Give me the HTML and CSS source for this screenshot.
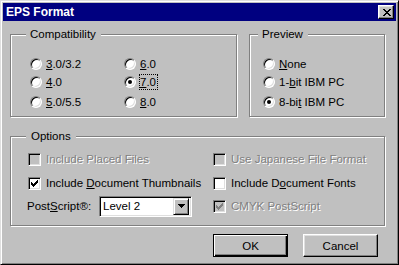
FILE: index.html
```html
<!DOCTYPE html>
<html lang="en">
<head>
    <meta charset="UTF-8">
    <meta name="viewport" content="width=device-width, initial-scale=1.0">
    <title>EPS Format</title>
    <link rel="stylesheet" href="styles.css">
</head>
<body>
    <div class="window">
        <div class="titlebar">
            <span class="title">EPS Format</span>
            <button class="close-btn" aria-label="Close">
                <svg width="8" height="7" viewBox="0 0 8 7" shape-rendering="crispEdges">
                    <path d="M0 0h2v1h-2z M6 0h2v1h-2z M1 1h2v1h-2z M5 1h2v1h-2z M2 2h4v1h-4z M3 3h2v1h-2z M2 4h4v1h-4z M1 5h2v1h-2z M5 5h2v1h-2z M0 6h2v1h-2z M6 6h2v1h-2z" fill="#000"/>
                </svg>
            </button>
        </div>

        <div class="dialog-body">
            <div class="top-row">
                <fieldset class="group compat">
                    <legend>Compatibility</legend>
                    <div class="group-inner radio-grid">
                        <div class="radio-col">
                            <label class="radio-item"><span class="radio"></span><span><u>3</u>.0/3.2</span></label>
                            <label class="radio-item"><span class="radio"></span><span><u>4</u>.0</span></label>
                            <label class="radio-item last"><span class="radio"></span><span><u>5</u>.0/5.5</span></label>
                        </div>
                        <div class="radio-col">
                            <label class="radio-item"><span class="radio"></span><span><u>6</u>.0</span></label>
                            <label class="radio-item"><span class="radio checked"></span><span class="focused"><u>7</u>.0</span></label>
                            <label class="radio-item last"><span class="radio"></span><span><u>8</u>.0</span></label>
                        </div>
                    </div>
                </fieldset>

                <fieldset class="group preview">
                    <legend>Preview</legend>
                    <div class="group-inner">
                        <label class="radio-item"><span class="radio"></span><span><u>N</u>one</span></label>
                        <label class="radio-item"><span class="radio"></span><span>1-<u>b</u>it IBM PC</span></label>
                        <label class="radio-item last"><span class="radio checked"></span><span>8-bi<u>t</u> IBM PC</span></label>
                    </div>
                </fieldset>
            </div>

            <fieldset class="group options">
                <legend>Options</legend>
                <div class="group-inner options-grid">
                    <label class="check-item disabled"><span class="checkbox"></span><span>Include Placed Files</span></label>
                    <label class="check-item disabled"><span class="checkbox"></span><span>Use Japanese File Format</span></label>

                    <label class="check-item">
                        <span class="checkbox">
                            <svg width="7" height="7" viewBox="0 0 7 7" shape-rendering="crispEdges"><path d="M6 0h1v1h-1z M5 1h2v1h-2z M0 2h1v1h-1z M4 2h3v1h-3z M0 3h2v1h-2z M3 3h3v1h-3z M0 4h5v1h-5z M1 5h3v1h-3z M2 6h1v1h-1z" fill="#000"/></svg>
                        </span>
                        <span>Include <u>D</u>ocument Thumbnails</span>
                    </label>
                    <label class="check-item"><span class="checkbox"></span><span>Include D<u>o</u>cument Fonts</span></label>

                    <div class="select-row">
                        <span class="select-label">Post<u>S</u>cript®:</span>
                        <div class="select">
                            <span class="select-value">Level 2</span>
                            <span class="select-btn">
                                <svg width="7" height="4" viewBox="0 0 7 4" shape-rendering="crispEdges"><path d="M0 0h7v1h-7z M1 1h5v1h-5z M2 2h3v1h-3z M3 3h1v1h-1z" fill="#000"/></svg>
                            </span>
                        </div>
                    </div>
                    <label class="check-item disabled">
                        <span class="checkbox">
                            <svg width="7" height="7" viewBox="0 0 7 7" shape-rendering="crispEdges"><path d="M6 0h1v1h-1z M5 1h2v1h-2z M0 2h1v1h-1z M4 2h3v1h-3z M0 3h2v1h-2z M3 3h3v1h-3z M0 4h5v1h-5z M1 5h3v1h-3z M2 6h1v1h-1z" fill="#808080"/></svg>
                        </span>
                        <span>CMYK PostScript</span>
                    </label>
                </div>
            </fieldset>

            <div class="buttons">
                <button class="btn default">OK</button>
                <button class="btn">Cancel</button>
            </div>
        </div>
    </div>
</body>
</html>
```

FILE: styles.css
```css
body {
    margin: 0;
    padding: 0;
    background-color: #c0c0c0;
    font-family: "Liberation Sans", Arial, sans-serif;
    font-size: 11.5px;
    color: #000;
}

.window {
    width: 399px;
    height: 265px;
    box-sizing: border-box;
    padding: 2px;
    background-color: #c0c0c0;
    border: 1px solid;
    border-color: #dfdfdf #000 #000 #dfdfdf;
    box-shadow: inset 1px 1px 0 #fff, inset -1px -1px 0 #808080;
}

/* title bar */
.titlebar {
    height: 18px;
    display: flex;
    align-items: center;
    justify-content: space-between;
    padding: 0 2px 0 3px;
    background-color: #000080;
    color: #fff;
}
.title {
    font-size: 12px;
    font-weight: bold;
    line-height: 18px;
}
.close-btn {
    width: 16px;
    height: 14px;
    padding: 0;
    display: flex;
    align-items: center;
    justify-content: center;
    background-color: #c0c0c0;
    border: 1px solid;
    border-color: #fff #000 #000 #fff;
    box-shadow: inset -1px -1px 0 #808080, inset 1px 1px 0 #dfdfdf;
    box-sizing: border-box;
}
.close-btn svg {
    display: block;
    margin-left: 1px;
}

/* body */
.dialog-body {
    padding: 6px 11px 0 7px;
}
.top-row {
    display: flex;
    gap: 12px;
}

/* group boxes */
.group {
    margin: 0;
    padding: 0;
    min-width: 0;
    box-sizing: border-box;
    border: 1px solid #808080;
    box-shadow: inset 1px 1px 0 #fff, 1px 1px 0 #fff;
}
.group legend {
    padding: 0 5px 0 4px;
    line-height: 14px;
    background-color: #c0c0c0;
}
.compat {
    width: 227px;
    height: 90px;
}
.compat legend {
    margin-left: 15px;
}
.preview {
    width: 136px;
    height: 90px;
}
.preview legend {
    margin-left: 8px;
}
.options {
    width: 375px;
    height: 97px;
    margin-top: 12px;
}
.options legend {
    margin-left: 15px;
    padding-left: 5px;
}

.group-inner {
    padding-top: 14px;
}
.compat .group-inner {
    padding-left: 19px;
}
.preview .group-inner {
    padding-left: 13px;
}

/* radios */
.radio-grid {
    display: flex;
}
.radio-col {
    width: 94px;
}
.radio-item {
    display: flex;
    align-items: center;
    height: 18px;
    line-height: 14px;
    white-space: nowrap;
}
.radio-item.last {
    margin-top: 2px;
}
.radio {
    position: relative;
    width: 12px;
    height: 12px;
    flex: none;
    margin-right: 4px;
    box-sizing: border-box;
    border-radius: 50%;
    background-color: #fff;
    border: 1px solid;
    border-color: #808080 #fff #fff #808080;
    box-shadow: inset 1px 1px 0 #000, inset -1px -1px 0 #dfdfdf;
}
.radio.checked::after {
    content: "";
    position: absolute;
    left: 3px;
    top: 3px;
    width: 4px;
    height: 4px;
    border-radius: 50%;
    background-color: #000;
}
.focused {
    outline: 1px dotted #000;
    outline-offset: 0;
    padding: 0 1px 0 0;
}

/* options */
.options-grid {
    padding: 4px 0 0 17px;
    display: grid;
    grid-template-columns: 185px auto;
    grid-template-rows: 24px 24px 22px;
    align-items: center;
}
.check-item {
    display: flex;
    align-items: center;
    line-height: 14px;
    white-space: nowrap;
}
.checkbox {
    width: 13px;
    height: 13px;
    flex: none;
    margin-right: 5px;
    box-sizing: border-box;
    display: flex;
    align-items: center;
    justify-content: center;
    background-color: #fff;
    border: 1px solid;
    border-color: #808080 #fff #fff #808080;
    box-shadow: inset 1px 1px 0 #000, inset -1px -1px 0 #dfdfdf;
}
.checkbox svg {
    display: block;
}
.check-item.disabled {
    color: #808080;
    text-shadow: 1px 1px 0 #fff;
}
.check-item.disabled .checkbox {
    background-color: #c0c0c0;
}

.select-row {
    display: flex;
    align-items: center;
    margin-left: -1px;
}
.select-label {
    width: 72px;
    white-space: nowrap;
}
.select {
    width: 93px;
    height: 21px;
    box-sizing: border-box;
    display: flex;
    align-items: center;
    justify-content: space-between;
    background-color: #fff;
    border: 1px solid;
    border-color: #808080 #fff #fff #808080;
    box-shadow: inset 1px 1px 0 #000, inset -1px -1px 0 #dfdfdf;
    padding: 2px;
}
.select-value {
    padding-left: 1px;
    line-height: 14px;
}
.select-btn {
    width: 16px;
    height: 17px;
    box-sizing: border-box;
    display: flex;
    align-items: center;
    justify-content: center;
    background-color: #c0c0c0;
    border: 1px solid;
    border-color: #dfdfdf #000 #000 #dfdfdf;
    box-shadow: inset 1px 1px 0 #fff, inset -1px -1px 0 #808080;
}

/* buttons */
.buttons {
    display: flex;
    justify-content: flex-end;
    gap: 15px;
    margin-top: 8px;
    padding-right: 7px;
}
.btn {
    width: 75px;
    height: 23px;
    padding: 0;
    font-family: inherit;
    font-size: 11.5px;
    color: #000;
    background-color: #c0c0c0;
    box-sizing: border-box;
    border: 1px solid;
    border-color: #fff #000 #000 #fff;
    box-shadow: inset -1px -1px 0 #808080, inset 1px 1px 0 #dfdfdf;
}
.btn.default {
    border-color: #000;
    box-shadow: inset 1px 1px 0 #fff, inset -1px -1px 0 #000, inset -2px -2px 0 #808080;
}
```
